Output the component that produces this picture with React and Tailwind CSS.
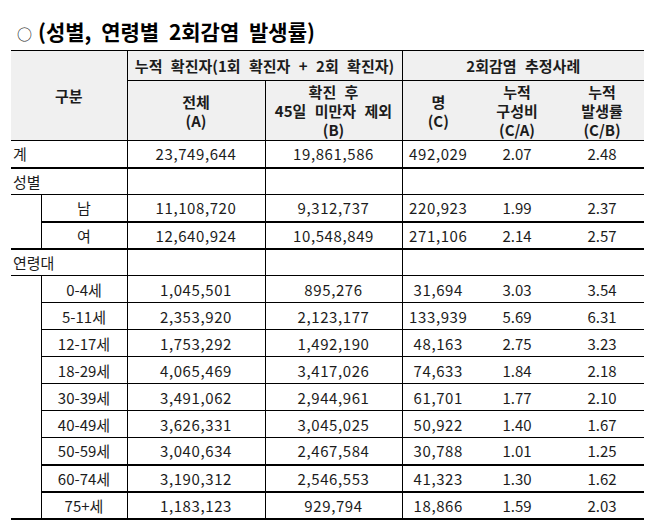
const font = {
  fontFamily: '"Noto Sans CJK KR", "Noto Sans", sans-serif',
};

const total = ["23,749,644", "19,861,586", "492,029", "2.07", "2.48"];

const sex = [
  ["남", "11,108,720", "9,312,737", "220,923", "1.99", "2.37"],
  ["여", "12,640,924", "10,548,849", "271,106", "2.14", "2.57"],
];

const ages = [
  ["0-4세", "1,045,501", "895,276", "31,694", "3.03", "3.54"],
  ["5-11세", "2,353,920", "2,123,177", "133,939", "5.69", "6.31"],
  ["12-17세", "1,753,292", "1,492,190", "48,163", "2.75", "3.23"],
  ["18-29세", "4,065,469", "3,417,026", "74,633", "1.84", "2.18"],
  ["30-39세", "3,491,062", "2,944,961", "61,701", "1.77", "2.10"],
  ["40-49세", "3,626,331", "3,045,025", "50,922", "1.40", "1.67"],
  ["50-59세", "3,040,634", "2,467,584", "30,788", "1.01", "1.25"],
  ["60-74세", "3,190,312", "2,546,553", "41,323", "1.30", "1.62"],
  ["75+세", "1,183,123", "929,794", "18,866", "1.59", "2.03"],
];

// rows whose bottom rule is drawn heavier
const thickAfter = ["50-59세", "60-74세", "75+세"];

function Values({ row, bottom }) {
  return (
    <>
      <td className={`border-r border-black tracking-[0.6px] ${bottom}`}>{row[0]}</td>
      <td className={`border-r border-black tracking-[0.6px] ${bottom}`}>{row[1]}</td>
      <td className={`tracking-[0.6px] ${bottom}`}>{row[2]}</td>
      <td className={bottom}>{row[3]}</td>
      <td className={bottom}>{row[4]}</td>
    </>
  );
}

export default function App() {
  return (
    <div className="w-[651px] h-[529px] bg-white text-[#1c1c1c]" style={font}>
      {/* Title */}
      <div className="h-[50px] pl-[17px] pt-[18px] flex items-start">
        <span className="text-[15px] leading-[26px] mr-[6px] mt-[3px]">○</span>
        <h1 className="text-[21px] leading-[27px] font-bold text-black [word-spacing:5px]">
          (성별, 연령별 2회감염 발생률)
        </h1>
      </div>

      <table className="ml-[11px] w-[633px] border-collapse table-fixed text-[15px] text-center">
        <colgroup>
          <col className="w-[30px]" />
          <col className="w-[86px]" />
          <col className="w-[138px]" />
          <col className="w-[137px]" />
          <col className="w-[72px]" />
          <col className="w-[86px]" />
          <col className="w-[84px]" />
        </colgroup>

        <thead className="bg-[#f0f0f0] font-bold leading-[19px] [word-spacing:5px]">
          <tr className="h-[30px]">
            <th rowSpan={2} colSpan={2} className="border-t border-b border-r border-black font-bold">
              구분
            </th>
            <th colSpan={2} className="border-t border-b border-r border-black font-bold">
              누적 확진자(1회 확진자 + 2회 확진자)
            </th>
            <th colSpan={3} className="border-t border-b border-black font-bold">
              2회감염 추정사례
            </th>
          </tr>
          <tr className="h-[60px]">
            <th className="border-b border-r border-black font-bold">
              전체
              <br />
              (A)
            </th>
            <th className="border-b border-r border-black font-bold">
              확진 후
              <br />
              45일 미만자 제외
              <br />
              (B)
            </th>
            <th className="border-b border-black font-bold">
              명
              <br />
              (C)
            </th>
            <th className="border-b border-black font-bold">
              누적
              <br />
              구성비
              <br />
              (C/A)
            </th>
            <th className="border-b border-black font-bold">
              누적
              <br />
              발생률
              <br />
              (C/B)
            </th>
          </tr>
        </thead>

        <tbody className="leading-[19px]">
          <tr className="h-[27px]">
            <td colSpan={2} className="border-r border-b-2 border-black text-left pl-[2px]">
              계
            </td>
            <Values row={total} bottom="border-b-2 border-black" />
          </tr>

          <tr className="h-[27px]">
            <td colSpan={2} className="border-r border-b border-black text-left pl-[2px]">
              성별
            </td>
            <td className="border-r border-b border-black" />
            <td className="border-r border-b border-black" />
            <td colSpan={3} className="border-b border-black" />
          </tr>
          {sex.map((r, i) => (
            <tr key={r[0]} className="h-[27px]">
              {i === 0 && (
                <td rowSpan={2} className="border-r border-b-2 border-black" />
              )}
              <td className="border-r border-b-2 border-black">{r[0]}</td>
              <Values row={r.slice(1)} bottom="border-b-2 border-black" />
            </tr>
          ))}

          <tr className="h-[27px]">
            <td colSpan={2} className="border-r border-b border-black text-left pl-[2px]">
              연령대
            </td>
            <td className="border-r border-b border-black" />
            <td className="border-r border-b border-black" />
            <td colSpan={3} className="border-b border-black" />
          </tr>
          {ages.map((r, i) => {
            const bottom = thickAfter.includes(r[0])
              ? "border-b-2 border-black"
              : "border-b border-black";
            return (
              <tr key={r[0]} className="h-[27px]">
                {i === 0 && (
                  <td rowSpan={9} className="border-r border-b-2 border-black" />
                )}
                <td className={`border-r ${bottom}`}>{r[0]}</td>
                <Values row={r.slice(1)} bottom={bottom} />
              </tr>
            );
          })}
        </tbody>
      </table>
    </div>
  );
}
